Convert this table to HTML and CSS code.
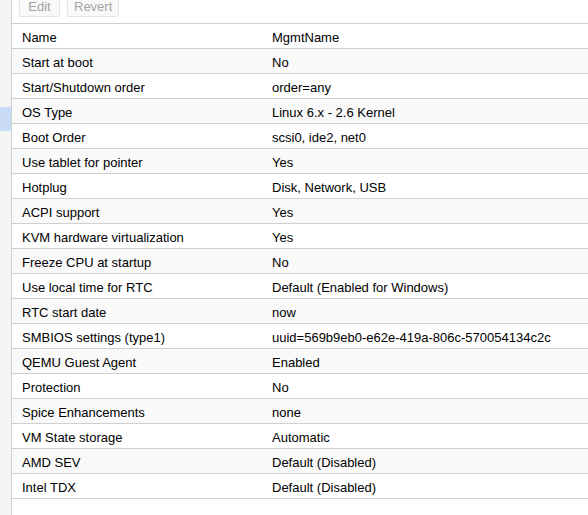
FILE: index.html
```html
<!DOCTYPE html>
<html>
<head>
<meta charset="utf-8">
<link rel="stylesheet" href="styles.css">
</head>
<body>
<div class="app">
  <div class="nav"><div class="nav-item"></div></div>
  <div class="main">
    <div class="toolbar">
      <button class="btn btn-edit">Edit</button>
      <button class="btn">Revert</button>
    </div>
    <div class="grid">
      <div class="row"><div class="k">Name</div><div class="v">MgmtName</div></div>
      <div class="row"><div class="k">Start at boot</div><div class="v">No</div></div>
      <div class="row"><div class="k">Start/Shutdown order</div><div class="v">order=any</div></div>
      <div class="row"><div class="k">OS Type</div><div class="v">Linux 6.x - 2.6 Kernel</div></div>
      <div class="row"><div class="k">Boot Order</div><div class="v">scsi0, ide2, net0</div></div>
      <div class="row"><div class="k">Use tablet for pointer</div><div class="v">Yes</div></div>
      <div class="row"><div class="k">Hotplug</div><div class="v">Disk, Network, USB</div></div>
      <div class="row"><div class="k">ACPI support</div><div class="v">Yes</div></div>
      <div class="row"><div class="k">KVM hardware virtualization</div><div class="v">Yes</div></div>
      <div class="row"><div class="k">Freeze CPU at startup</div><div class="v">No</div></div>
      <div class="row"><div class="k">Use local time for RTC</div><div class="v">Default (Enabled for Windows)</div></div>
      <div class="row"><div class="k">RTC start date</div><div class="v">now</div></div>
      <div class="row"><div class="k">SMBIOS settings (type1)</div><div class="v">uuid=569b9eb0-e62e-419a-806c-570054134c2c</div></div>
      <div class="row"><div class="k">QEMU Guest Agent</div><div class="v">Enabled</div></div>
      <div class="row"><div class="k">Protection</div><div class="v">No</div></div>
      <div class="row"><div class="k">Spice Enhancements</div><div class="v">none</div></div>
      <div class="row"><div class="k">VM State storage</div><div class="v">Automatic</div></div>
      <div class="row"><div class="k">AMD SEV</div><div class="v">Default (Disabled)</div></div>
      <div class="row"><div class="k">Intel TDX</div><div class="v">Default (Disabled)</div></div>
    </div>
  </div>
</div>
</body>
</html>
```
FILE: styles.css
```css
html, body {
  margin: 0;
  padding: 0;
  background: #fff;
  overflow: hidden;
}
body {
  font-family: "Liberation Sans", Arial, sans-serif;
  font-size: 13px;
  color: #000;
}
.app {
  display: flex;
  height: 515px;
}
.nav {
  width: 11px;
  flex: none;
  background: #f5f5f5;
  border-right: 1px solid #d0d0d0;
}
.nav-item {
  margin-top: 107px;
  height: 24px;
  background: #c8daf5;
}
.main {
  flex: 1;
  min-width: 0;
}
.toolbar {
  height: 23px;
  border-bottom: 1px solid #d0d0d0;
  display: flex;
  align-items: flex-start;
  gap: 7px;
  padding-left: 7px;
  overflow: hidden;
}
.btn {
  margin-top: -5px;
  height: 22px;
  padding: 2px 6px 0;
  font-family: inherit;
  font-size: 13px;
  line-height: 18px;
  color: #a3a3a3;
  background: #f9f9f9;
  border: 1px solid #e3e3e3;
  border-radius: 3px;
}
.btn-edit {
  min-width: 41px;
}
.row {
  display: grid;
  grid-template-columns: 250px 1fr;
  height: 21px;
  padding-top: 3px;
  line-height: 21px;
  border-bottom: 1px solid #d0d0d0;
  white-space: nowrap;
}
.row:nth-child(even) {
  background: #f9f9f9;
}
.k, .v {
  padding-left: 10px;
}
```
